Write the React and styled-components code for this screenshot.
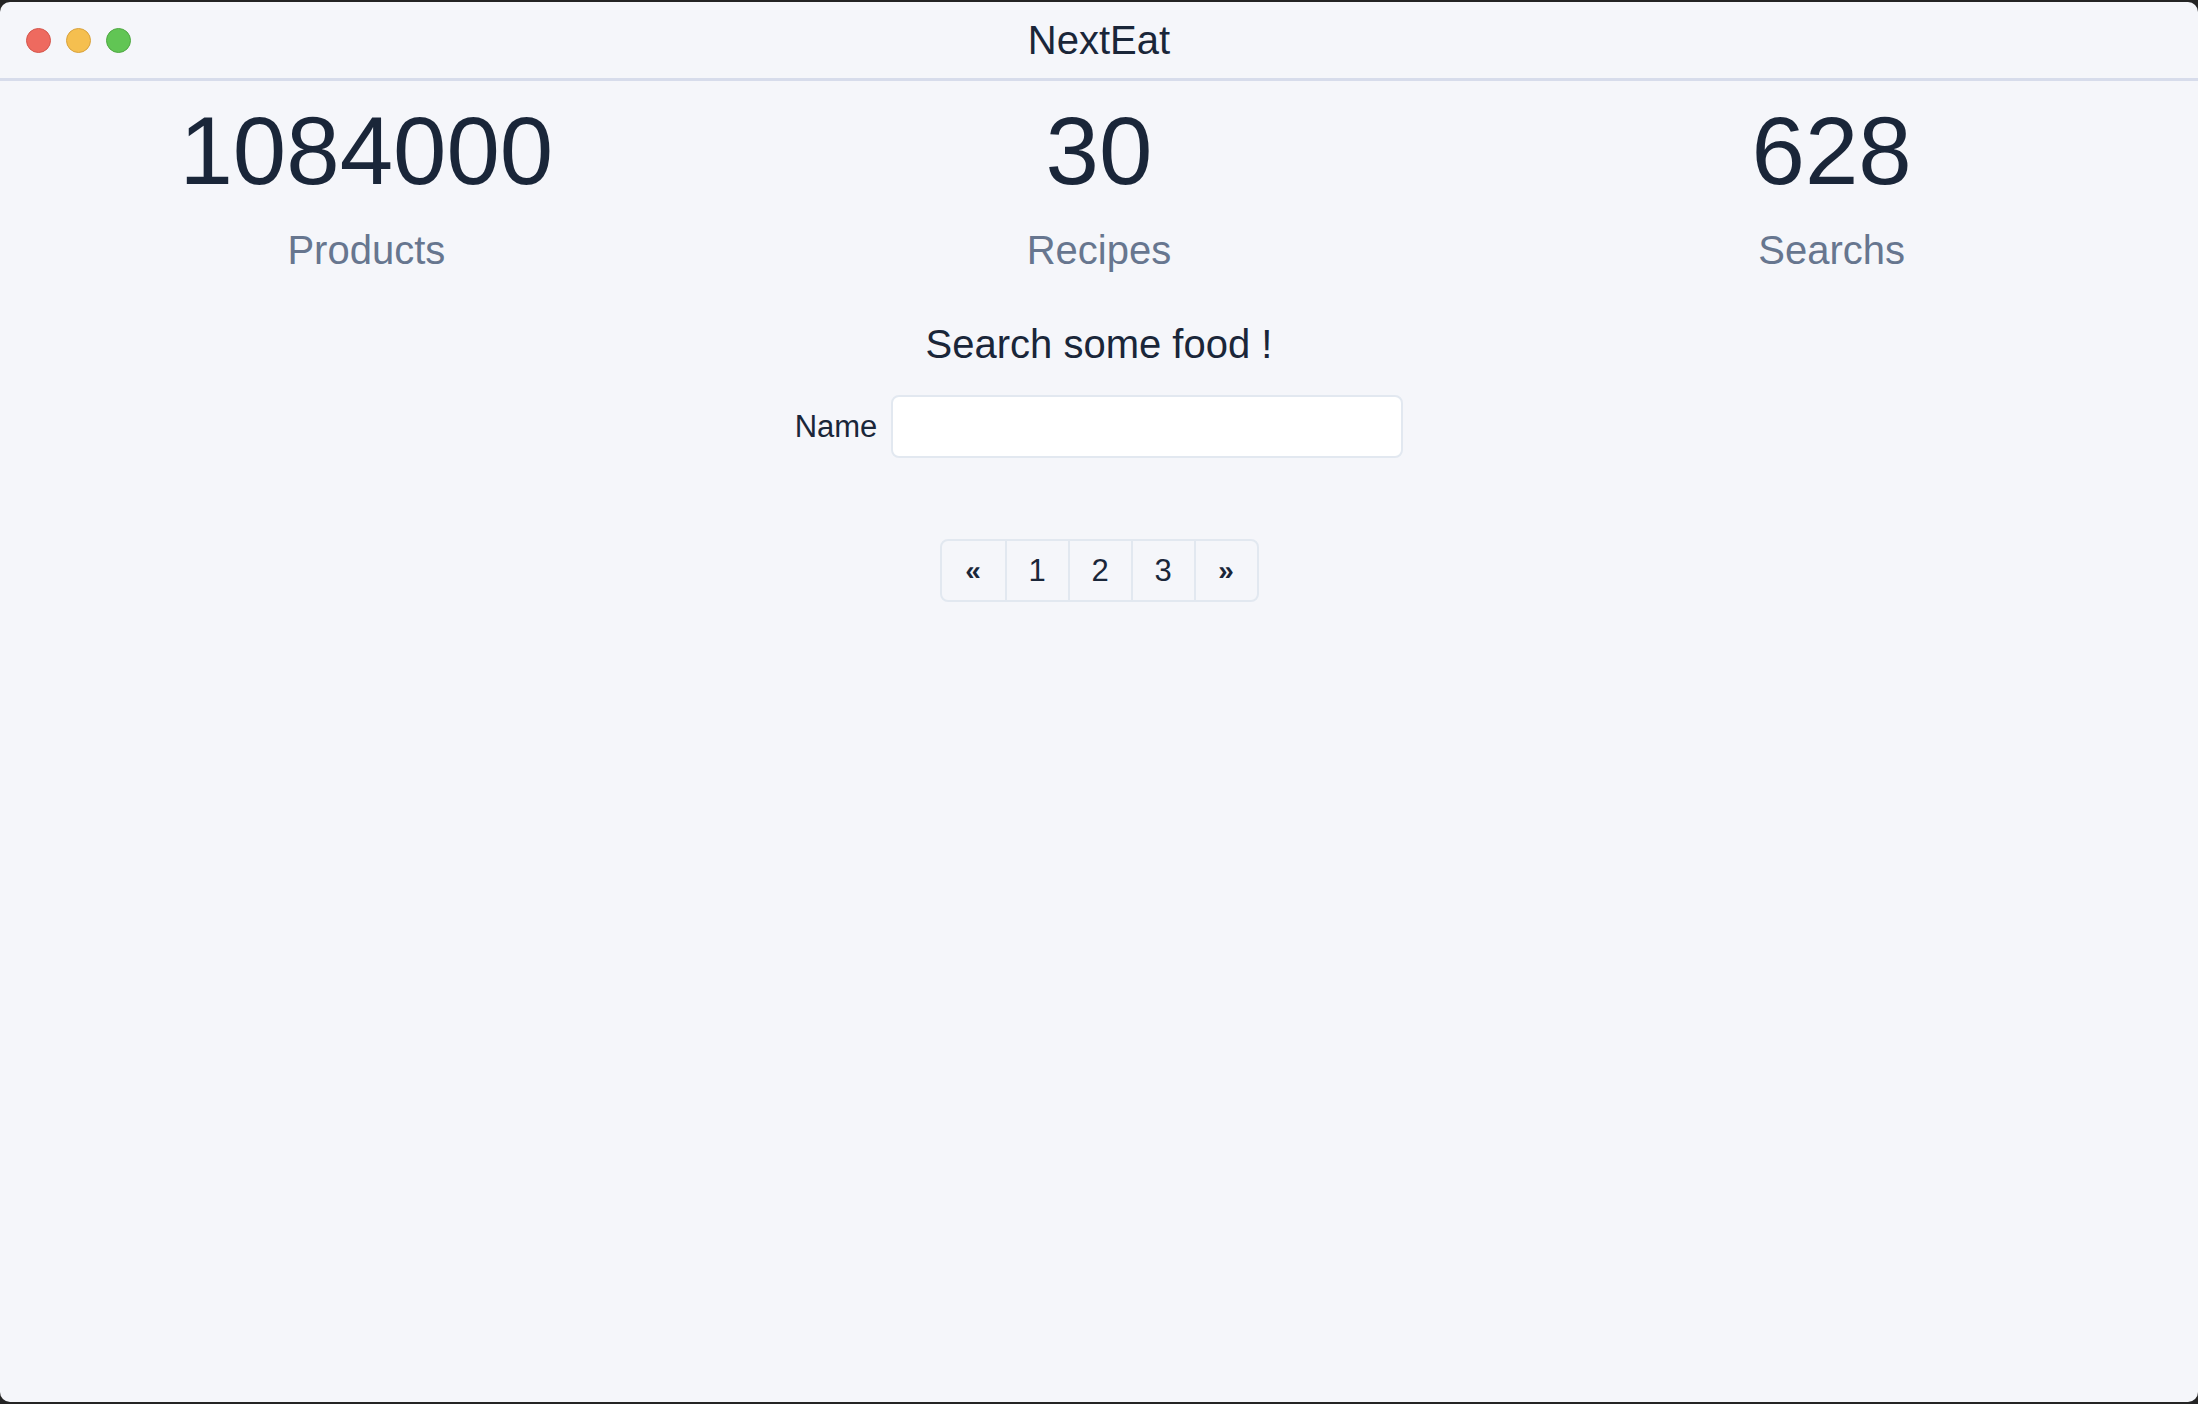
import React from 'react'
import styled, { createGlobalStyle } from 'styled-components'

const GlobalStyle = createGlobalStyle`
  html, body {
    margin: 0;
    padding: 0;
    background: #242424;
  }
  * {
    box-sizing: border-box;
  }
`

const Window = styled.div`
  margin: 2px 0;
  height: 1400px;
  background: #f5f6fa;
  border-radius: 10px;
  overflow: hidden;
  font-family: "Liberation Sans", Arial, sans-serif;
  color: #1a2639;
`

const TitleBar = styled.header`
  display: grid;
  grid-template-columns: 1fr auto 1fr;
  align-items: center;
  height: 79px;
  border-bottom: 3px solid #d7dceb;
`

const Lights = styled.div`
  display: flex;
  gap: 15px;
  padding-left: 26px;
`

const Light = styled.span`
  width: 25px;
  height: 25px;
  border-radius: 50%;
  background: ${p => p.color};
  border: 1px solid ${p => p.edge};
`

const Title = styled.h1`
  margin: 0;
  font-size: 40px;
  font-weight: 400;
  line-height: 40px;
`

const Stats = styled.section`
  display: grid;
  grid-template-columns: repeat(3, 1fr);
  padding-top: 22px;
`

const Stat = styled.div`
  display: flex;
  flex-direction: column;
  align-items: center;
  gap: 31px;
`

const StatValue = styled.div`
  font-size: 96px;
  line-height: 96px;
`

const StatLabel = styled.div`
  font-size: 40px;
  line-height: 40px;
  color: #67768f;
`

const SearchBlock = styled.section`
  display: flex;
  flex-direction: column;
  align-items: center;
  padding-top: 54px;
`

const Heading = styled.h2`
  margin: 0;
  font-size: 40px;
  font-weight: 400;
  line-height: 40px;
`

const Field = styled.label`
  display: flex;
  align-items: center;
  gap: 14px;
  margin-top: 31px;
  font-size: 31px;
`

const Input = styled.input`
  width: 512px;
  height: 63px;
  border: 2px solid #e2e8f0;
  border-radius: 8px;
  background: #fff;
  font: inherit;
  padding: 0 14px;
  outline: none;
`

const Pager = styled.nav`
  display: flex;
  margin-top: 81px;
  border: 2px solid #e2e8f0;
  border-radius: 8px;
  overflow: hidden;
`

const PageButton = styled.button`
  width: 63px;
  height: 59px;
  border: none;
  border-left: ${p => (p.first ? 'none' : '2px solid #e2e8f0')};
  background: transparent;
  font-family: inherit;
  font-size: ${p => (p.arrow ? '28px' : '31px')};
  font-weight: ${p => (p.arrow ? 700 : 400)};
  color: #1a2639;
  padding: 0;
  cursor: pointer;
`

const stats = [
  { value: '1084000', label: 'Products' },
  { value: '30', label: 'Recipes' },
  { value: '628', label: 'Searchs' },
]

const App = () => {
  return (
    <>
      <GlobalStyle />
      <Window>
        <TitleBar>
          <Lights>
            <Light color="#ee6a5f" edge="#d5564c" />
            <Light color="#f5bf4f" edge="#d9a23c" />
            <Light color="#61c554" edge="#4fa842" />
          </Lights>
          <Title>NextEat</Title>
          <div />
        </TitleBar>
        <Stats>
          {stats.map(s => (
            <Stat key={s.label}>
              <StatValue>{s.value}</StatValue>
              <StatLabel>{s.label}</StatLabel>
            </Stat>
          ))}
        </Stats>
        <SearchBlock>
          <Heading>Search some food !</Heading>
          <Field>
            Name
            <Input type="text" />
          </Field>
          <Pager>
            <PageButton first arrow>«</PageButton>
            <PageButton>1</PageButton>
            <PageButton>2</PageButton>
            <PageButton>3</PageButton>
            <PageButton arrow>»</PageButton>
          </Pager>
        </SearchBlock>
      </Window>
    </>
  )
}

export default App
